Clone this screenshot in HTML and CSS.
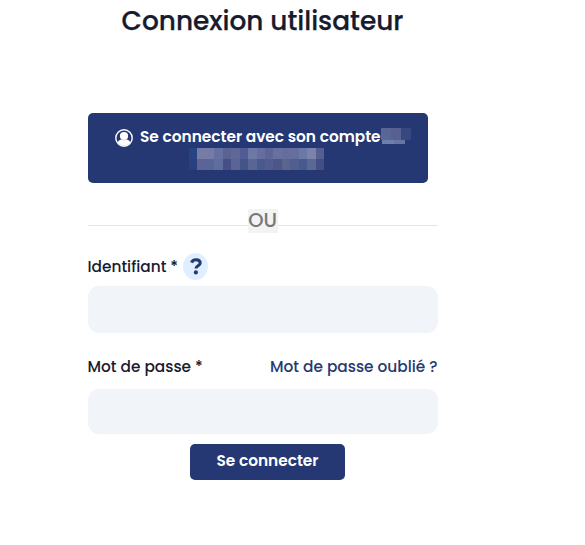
FILE: index.html
```html
<!DOCTYPE html>
<html lang="fr">
<head>
<meta charset="utf-8">
<title>Connexion utilisateur</title>
<link rel="stylesheet" href="styles.css">
</head>
<body>
<main class="login">
  <h1 class="title"><span>Connexion utilisateur</span></h1>
  <a class="sso">
    <span class="sso-line">
      <svg class="user" viewBox="0 0 18 18" width="18" height="18">
        <circle cx="9" cy="9" r="8.2" fill="none" stroke="#fff" stroke-width="1.4"/>
        <circle cx="9" cy="7" r="4.1" fill="#fff"/>
        <path d="M2.6 13.2C3.7 11.1 5.4 10.2 7 10.5Q9 12 11 10.5C12.6 10.2 14.3 11.1 15.4 13.2C12.4 17.8 5.6 17.8 2.6 13.2Z" fill="#fff"/>
      </svg>
      <span class="sso-text">Se connecter avec son compte</span>
      <svg class="mask-small" width="30" height="16" shape-rendering="crispEdges">
        <path fill="#5a6796" d="M0 0h10v12H0z"/><path fill="#566191" d="M10 0h10v12H10z"/><path fill="#37477f" d="M20 0h10v12H20z"/>
        <path fill="#6d7fae" d="M1 12h12v4H1z"/><path fill="#6a74a0" d="M13 12h11v4H13z"/>
      </svg>
    </span>
    <span class="mask">
      <i style="background:#284383"></i><i style="background:#767ca6"></i><i style="background:#757ba4"></i><i style="background:#6470a0"></i><i style="background:#5b6395"></i><i style="background:#5e6897"></i><i style="background:#505c93"></i><i style="background:#6c79a5"></i><i style="background:#646fa0"></i><i style="background:#5c6596"></i><i style="background:#6771a0"></i><i style="background:#646d9c"></i><i style="background:#656e9e"></i><i style="background:#6a7aa7"></i><i style="background:#7c83ab"></i><i style="background:#555f92"></i>
      <i style="background:#28407f"></i><i style="background:#5d6393"></i><i style="background:#5a6597"></i><i style="background:#606c9b"></i><i style="background:#484f87"></i><i style="background:#5a6595"></i><i style="background:#455487"></i><i style="background:#596694"></i><i style="background:#48598e"></i><i style="background:#525c8f"></i><i style="background:#4c5689"></i><i style="background:#59648f"></i><i style="background:#535d8f"></i><i style="background:#48598e"></i><i style="background:#5d6795"></i><i style="background:#434e84"></i>
    </span>
  </a>
  <div class="or"><span>OU</span></div>
  <form class="form">
    <div class="label-row first">
      <label class="label-id" for="id">Identifiant *</label>
      <span class="help"><svg width="12" height="17" viewBox="0 0 12 17"><path d="M1.5 4.6C2.3 2.4 4 1.7 5.9 1.7C8.4 1.7 10.2 3 10.2 5C10.2 7.8 6 7.7 6 10.6" fill="none" stroke="#263874" stroke-width="3.1"/><circle cx="5.9" cy="14.4" r="2.1" fill="#263874"/></svg></span>
    </div>
    <input class="field" id="id" type="text">
    <div class="label-row second">
      <label class="label-pw" for="pw">Mot de passe *</label>
      <a class="forgot">Mot de passe oublié ?</a>
    </div>
    <input class="field short" id="pw" type="password">
    <button class="submit" type="button"><span>Se connecter</span></button>
  </form>
</main>
</body>
</html>
```
FILE: styles.css
```css
* { box-sizing: border-box; }
body {
  margin: 0;
  background: #fff;
  color: #171b2e;
  font-family: Poppins, Inter, sans-serif;
  font-size: 15.35px;
  font-weight: 500;
}
.login { width: 350px; margin-left: 87.5px; }
.title {
  height: 42px;
  margin: 0 0 71px;
  font-size: 26.4px;
  font-weight: 500;
  line-height: 42px;
  text-align: center;
  white-space: nowrap;
  -webkit-text-stroke: 0.25px currentColor;
}
.sso {
  display: block;
  width: 340px;
  height: 70px;
  margin-left: 0.5px;
  padding-top: 13px;
  border-radius: 5px;
  background: #263874;
  color: #fff;
}
.sso-line { display: flex; height: 22px; padding-left: 27px; }
.user { flex: none; margin-top: 3px; }
.sso-text {
  flex: none;
  width: 241px;
  margin-left: 7px;
  font-weight: 600;
  line-height: 22px;
  white-space: nowrap;
}
.mask-small { flex: none; margin-top: 2px; }
.mask {
  display: grid;
  grid-template-columns: repeat(16, 1fr);
  grid-template-rows: 11px 11px;
  width: 135px;
  margin-left: 101px;
}
.or {
  display: flex;
  align-items: center;
  height: 24px;
  margin-top: 26px;
  color: #777;
  font-size: 19.5px;
  line-height: 24px;
}
.or::before, .or::after {
  content: "";
  flex: 1;
  height: 1px;
  margin-top: 9px;
  background: #e5e5e5;
}
.or span { width: 30px; background: #f3f3f3; text-align: center; }
.form { margin: 0; }
.label-row { display: flex; align-items: center; white-space: nowrap; }
.first { height: 27px; margin: 20px 0 6px; }
.second { height: 24px; justify-content: space-between; margin: 21px 0 11px; }
.help {
  display: flex;
  align-items: center;
  justify-content: center;
  width: 25px;
  height: 27px;
  margin-left: 4.5px;
  border-radius: 50%;
  background: #e0efff;
}
.label-id { width: 91px; }
.forgot { color: #263874; }
.field {
  display: block;
  width: 350px;
  height: 47px;
  margin-left: 0.5px;
  border: 0;
  border-radius: 11px;
  background: #f1f5f9;
}
.short { height: 45px; }
.submit {
  display: block;
  width: 155px;
  height: 36px;
  margin: 10px 0 0 102.5px;
  padding: 0 0 3px;
  border: 0;
  border-radius: 5px;
  background: #263874;
  color: #fff;
  font: 600 15.35px Poppins, Inter, sans-serif;
}
```
